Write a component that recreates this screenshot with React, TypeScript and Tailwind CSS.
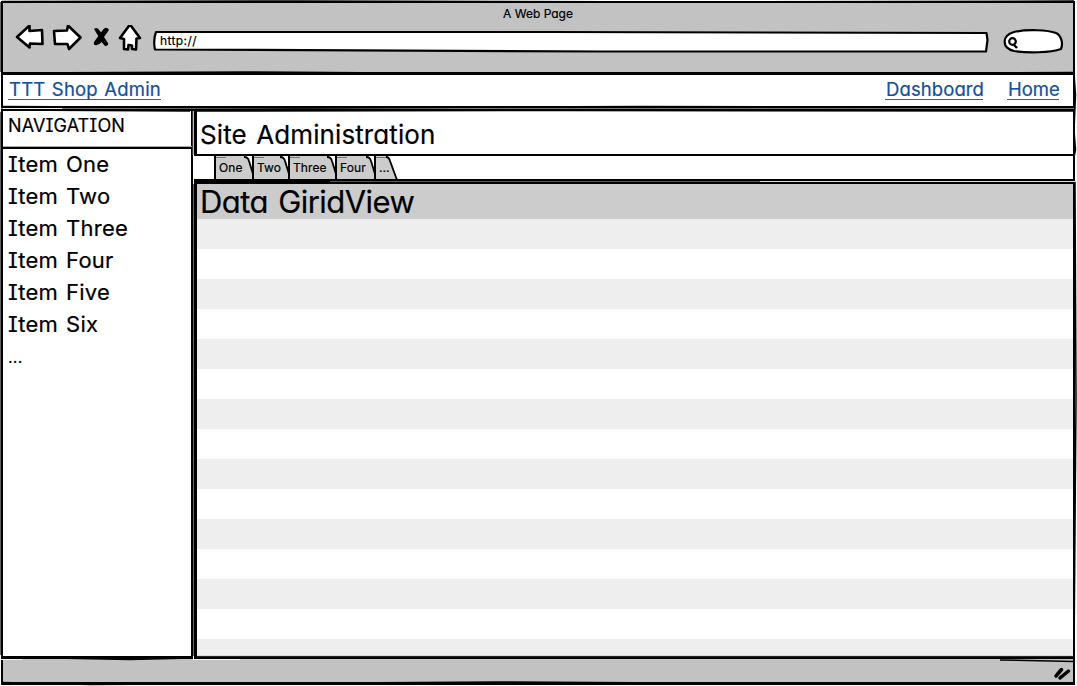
import type { ReactNode } from "react";

const items: string[] = ["Item One", "Item Two", "Item Three", "Item Four", "Item Five", "Item Six"];
const rows = Array.from({ length: 15 }, (_, i) => i);

function Tab({ label, className, last }: { label: string; className: string; last?: boolean }) {
  return (
    <div className={`relative h-[24px] shrink-0 ${className}`}>
      <svg className="absolute inset-0 h-full w-full overflow-visible" aria-hidden="true">
        <rect x="1" y="0" width="100%" height="24" fill="#ccc" />
        <path d="M1 24V0" stroke="#000" strokeWidth="2" />
        <path d="M2 1.5H12" stroke="#777" strokeWidth="1" />
        <svg x="100%" width="1" height="24" overflow="visible">
          <path d={last ? "M-7 0L-5 2 2 24H3V0Z" : "M-5 0L-3 3 1 18V24H2V0Z"} fill="#fff" />
          <path d={last ? "M-9 1Q-6 1 -5 5L2 24" : "M-8 1Q-4 1 -3 5L1 18"} stroke="#000" strokeWidth="1.8" fill="none" />
        </svg>
      </svg>
      <span className="relative block pt-[4px] pl-[5px] text-[12px] leading-4 tracking-[0.1px]">{label}</span>
    </div>
  );
}

function LinkText({ children, className }: { children: ReactNode; className: string }) {
  return (
    <a className={`block h-[22px] border-b border-[#2f62a0] pl-px text-[18.5px] leading-[22px] text-[#13509b] ${className}`}>
      {children}
    </a>
  );
}

function SketchEdges() {
  return (
    <svg className="pointer-events-none absolute inset-0 h-full w-full" viewBox="0 0 1077 686" fill="none" aria-hidden="true">
      <g stroke="#000" strokeWidth="1.5">
        <path d="M2 1.5L300 1 700 2 1074 1" />
        <path d="M2 73L250 72 560 74 1074 72.5" />
        <path d="M2 106.5L300 108 640 106.5 1074 107" />
        <path d="M2 110L190 111M195 111L560 110.5 1074 111" />
        <path d="M2 657L130 659.5 192 658" />
        <path d="M2 682.5L90 684.5 500 682 850 684 1074 683" />
        <path d="M1074 73L1075.5 95 1074 130 1075.5 150 1074 157M1075 182L1076 400 1074 655" />
      </g>
      <path d="M196 183H1073" stroke="#000" strokeWidth="2" />
      <path d="M330 181.5H1077" stroke="#555" />
      <path d="M760 181.5H1077" stroke="#ddd" />
      <g stroke="#666">
        <path d="M0.5 2V72M0.5 112V655" />
        <path d="M193.5 184V656" />
      </g>
      <path d="M193 111V155" stroke="#777" />
      <path d="M3 108.5H62" stroke="#eee" />
      <path d="M3 146.5H192" stroke="#aaa" />
      <path d="M193 659.500H240M0 659.500H22" stroke="#eee" />
      <path d="M197 656H1073" stroke="#999" strokeWidth="0.5" />
      <path d="M1000 660L1074 661.5" stroke="#000" strokeWidth="1.5" />
    </svg>
  );
}

export default function App() {
  return (
    <div className="relative flex h-[686px] w-[1077px] flex-col overflow-hidden bg-white pt-px pr-[2px] pb-px pl-px font-['Inter','Noto_Sans',sans-serif] whitespace-nowrap text-black [-webkit-text-stroke:0.2px_currentColor] [font-feature-settings:'cv11','cv08']">
      <header className="h-[74px] shrink-0 border-2 border-b-[3px] border-black bg-[#c2c2c2]">
        <div className="flex h-[22px] items-center justify-center text-[12px]">A Web Page</div>
        <div className="flex h-[32px] items-center">
          <svg className="h-[32px] w-[150px] shrink-0" viewBox="3 25 150 32" fill="#fff" stroke="#000" strokeWidth="2.6" strokeLinejoin="round" aria-hidden="true">
            <path d="M17 37L29.5 25.5V31L42 30 42.5 44 30 43.5 29.5 47.5Z" />
            <path d="M54 31L67 30.5 68 25.5 80.5 37.5 69 49 67.5 44 55 44Z" />
            <g fill="#000" stroke="none">
              <path d="M94 29Q97 26 100 31L108 43Q109 46 105 46Q101 42 100 39Z" />
              <path d="M109 30Q106 25 102 31L94 42Q93 46 97 45Q103 43 104 37Z" />
            </g>
            <path d="M130 24.5L140 38 136.5 38.5 136 49.5 132 49V45.5L128.5 45 128 49.5 124 49V39L120 38Z" />
          </svg>
          <div className="relative flex h-[24px] w-[836px] shrink-0 items-center pl-[7px] text-[12px] tracking-[0.4px]">
            <svg className="absolute inset-0 h-full w-full" viewBox="153 29 836 24" fill="#fff" stroke="#000" strokeWidth="2.2" strokeLinejoin="round" aria-hidden="true">
              <path d="M156 32L550 32 986.5 33 987.5 40 986 51.500 600 51.500 155 49.500Q153 40 156 32Z" />
            </svg>
            <span className="relative">http://</span>
          </div>
          <svg className="ml-[13px] h-[28px] w-[62px] shrink-0" viewBox="1002 26 62 28" fill="#fff" stroke="#000" strokeWidth="2.2" aria-hidden="true">
            <path d="M1014 31C1027 28 1048 29 1056 32C1062 35 1063 43 1061 48C1050 52 1027 52 1014 50C1002 47 1001 35 1014 31Z" />
            <circle cx="1012.500" cy="40.500" r="3.300" />
            <path d="M1014 44L1017 47" strokeWidth="2.400" />
          </svg>
        </div>
      </header>
      <nav className="flex h-[31px] shrink-0 items-start border-x-2 border-black bg-white pt-[3px] pr-[14px] pl-[5px]">
        <LinkText className="w-[153px] tracking-[0.2px] [word-spacing:1px]">TTT Shop Admin</LinkText>
        <LinkText className="ml-auto w-[98px] tracking-[0.1px]">Dashboard</LinkText>
        <LinkText className="ml-[24px] w-[52px] tracking-[0px]">Home</LinkText>
      </nav>
      <div className="h-[5px] shrink-0 border-y-2 border-black bg-[#777]" />
      <div className="flex h-[548px] shrink-0">
        <aside className="flex w-[192px] shrink-0 flex-col border-x-2 border-b-[3px] border-black">
          <h2 className="h-[38px] shrink-0 border-b-2 border-black pt-[3px] pl-[5px] text-[18px] leading-6 tracking-[0.1px]">NAVIGATION</h2>
          <ul className="pl-[5px] text-[22px] leading-8 tracking-[0.25px] [word-spacing:1.5px]">
            {items.map((label) => <li key={label} className="-mt-px mb-px">{label}</li>)}
            <li className="text-[16px]">...</li>
          </ul>
        </aside>
        <main className="ml-px flex w-[881px] flex-col border-r-2 border-b-[3px] border-black">
          <h1 className="h-[45px] shrink-0 border-b-2 border-l-[3px] border-black pt-[8px] pl-[3px] text-[26px] leading-8 tracking-[0.1px] [word-spacing:2px]">Site Administration</h1>
          <div className="flex h-[23px] shrink-0 pl-[20px]">
            <Tab label="One" className="w-[38px]" />
            <Tab label="Two" className="w-[36px]" />
            <Tab label="Three" className="w-[47px]" />
            <Tab label="Four" className="w-[39px]" />
            <Tab label="..." className="w-[21px]" last />
          </div>
          <div className="relative h-[5px] shrink-0 bg-black" />
          <section className="min-h-0 flex-1 overflow-hidden border-l-[3px] border-black">
            <h2 className="h-[35px] bg-[#ccc] pl-[3px] text-[31px] leading-[36px] tracking-[-0.55px] [word-spacing:2px]">Data GiridView</h2>
            {rows.map((row) => <div key={row} className="h-[30px] odd:bg-white even:bg-[#eee]" />)}
          </section>
        </main>
      </div>
      <footer className="flex h-[26px] shrink-0 items-center justify-end border-x-2 border-b-[3px] border-black bg-[#c2c2c2] pr-[2px]">
        <svg className="mt-[4px] h-[16px] w-[18px]" viewBox="1053 664 18 16" stroke="#000" strokeWidth="3.500" strokeLinecap="round" aria-hidden="true">
          <path d="M1056 675L1061.500 668.500M1060 677L1068.500 670" />
        </svg>
      </footer>
      <SketchEdges />
    </div>
  );
}
